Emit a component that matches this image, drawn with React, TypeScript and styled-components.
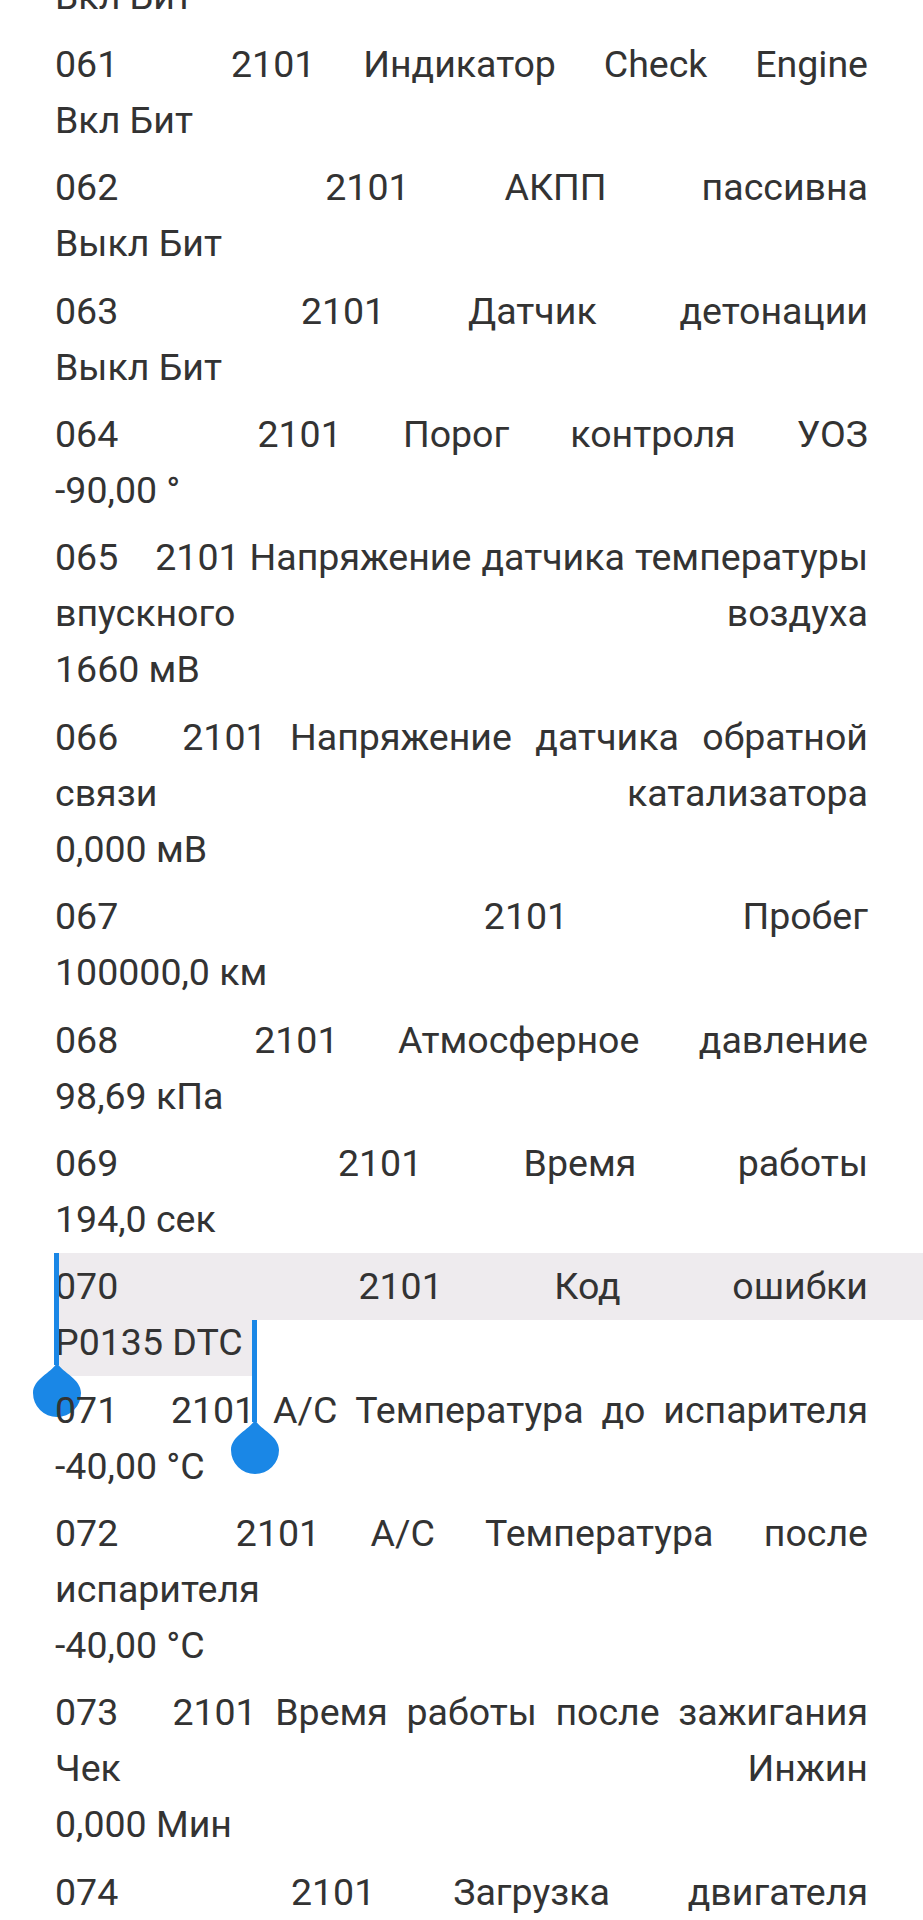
import React from "react";
import styled, { createGlobalStyle, css } from "styled-components";

const GlobalStyle = createGlobalStyle`
  html, body {
    margin: 0;
    padding: 0;
    background: #ffffff;
  }
  body {
    font-family: Roboto, "Noto Sans", sans-serif;
    overflow: hidden;
  }
`;

const HANDLE_BLUE = "#1a87e6";
const SELECT_GRAY = "#eeebee";

const Page = styled.div`
  display: flex;
  flex-direction: column;
  /* the list is scrolled, so the previous entry sits above the top edge */
  margin-top: -99px;
  padding: 0 55px;
  color: #333333;
  font-size: 37.5px;
  line-height: 56px;
`;

const Entry = styled.div`
  position: relative;
  display: flex;
  flex-direction: column;
  padding-top: 11.4px;
`;

const Name = styled.div<{ $selected?: boolean }>`
  white-space: pre-wrap;
  text-align: justify;
  text-align-last: justify;

  ${(p) =>
    p.$selected &&
    css`
      background: ${SELECT_GRAY};
      padding: 5.6px 55px 5.4px 0;
      margin: -5.6px -55px -5.4px 0;
    `}
`;

const Num = styled.span`
  margin-right: 17px;
`;

const Value = styled.div`
  text-align: left;
`;

const Selected = styled.span`
  display: inline-block;
  background: ${SELECT_GRAY};
  padding: 5.4px 13px 5.4px 0;
  margin: -5.4px 0;
`;

const HandleLine = styled.div<{ $left: number; $top: number; $height: number }>`
  position: absolute;
  left: ${(p) => p.$left}px;
  top: ${(p) => p.$top}px;
  width: 5px;
  height: ${(p) => p.$height}px;
  background: ${HANDLE_BLUE};
`;

const DropSvg = styled.svg<{ $left: number; $top: number }>`
  position: absolute;
  left: ${(p) => p.$left}px;
  top: ${(p) => p.$top}px;
  width: 48px;
  height: 54px;
`;

function Drop({ left, top }: { left: number; top: number }) {
  return (
    <DropSvg $left={left} $top={top} viewBox="0 0 48 54">
      <path
        d="M24 0 C30 10 48 16 48 30 A24 24 0 1 1 0 30 C0 16 18 10 24 0 Z"
        fill={HANDLE_BLUE}
      />
    </DropSvg>
  );
}

type Row = { num: string; name: string; value: string; selected?: boolean };

const rows: Row[] = [
  { num: "060", name: "2101 Реле вентилятора", value: "Вкл Бит" },
  { num: "061", name: "2101 Индикатор Check Engine", value: "Вкл Бит" },
  { num: "062", name: "2101 АКПП пассивна", value: "Выкл Бит" },
  { num: "063", name: "2101 Датчик детонации", value: "Выкл Бит" },
  { num: "064", name: "2101 Порог контроля УОЗ", value: "-90,00 °" },
  {
    num: "065",
    name: "2101 Напряжение датчика температуры впускного воздуха",
    value: "1660 мВ",
  },
  {
    num: "066",
    name: "2101 Напряжение датчика обратной связи катализатора",
    value: "0,000 мВ",
  },
  { num: "067", name: "2101 Пробег", value: "100000,0 км" },
  { num: "068", name: "2101 Атмосферное давление", value: "98,69 кПа" },
  { num: "069", name: "2101 Время работы", value: "194,0 сек" },
  { num: "070", name: "2101 Код ошибки", value: "P0135 DTC", selected: true },
  { num: "071", name: "2101 A/C Температура до испарителя", value: "-40,00 °C" },
  { num: "072", name: "2101 A/C Температура после испарителя", value: "-40,00 °C" },
  {
    num: "073",
    name: "2101 Время работы после зажигания Чек Инжин",
    value: "0,000 Мин",
  },
  { num: "074", name: "2101 Загрузка двигателя", value: "12,50 %" },
];

export default function App() {
  return (
    <>
      <GlobalStyle />
      <Page>
        {rows.map((r) => (
          <Entry key={r.num}>
            <Name $selected={r.selected}>
              <Num>{r.num}</Num>
              {"  "}
              {r.name}
            </Name>
            <Value>{r.selected ? <Selected>{r.value}</Selected> : r.value}</Value>
            {r.selected && (
              <>
                <HandleLine $left={-1} $top={6} $height={112} />
                <Drop left={-22.5} top={116} />
                <HandleLine $left={197} $top={73} $height={102} />
                <Drop left={175.5} top={173} />
              </>
            )}
          </Entry>
        ))}
      </Page>
    </>
  );
}
